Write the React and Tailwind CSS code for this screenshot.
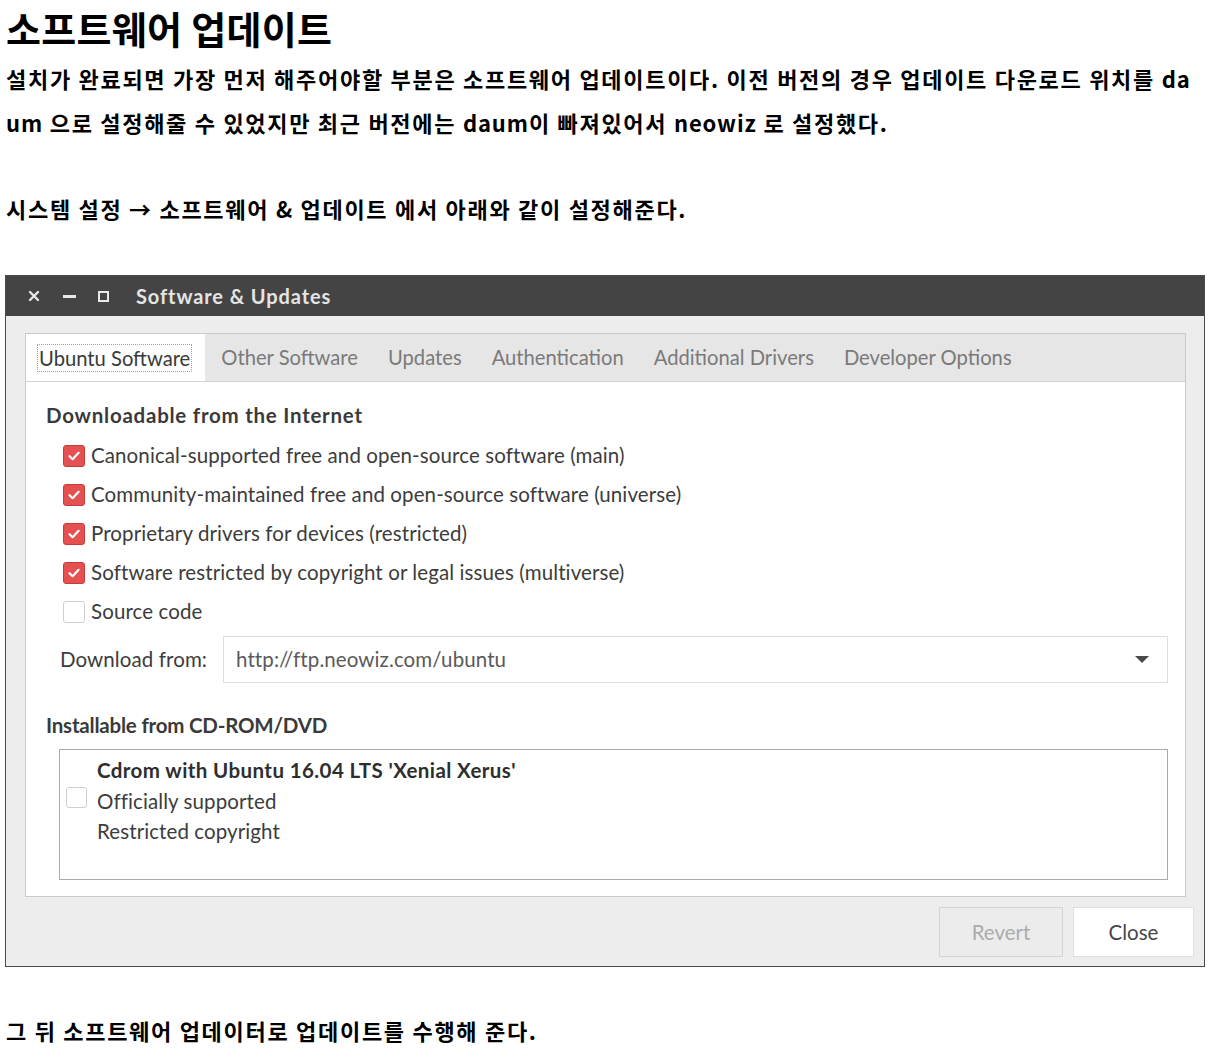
import React from 'react';

const ko = { fontFamily: '"Noto Sans CJK KR", "Noto Sans", sans-serif' };
const ui = { fontFamily: 'Lato, "Noto Sans", sans-serif' };

const tabs = ['Ubuntu Software', 'Other Software', 'Updates', 'Authentication', 'Additional Drivers', 'Developer Options'];

const sources = [
    { label: 'Canonical-supported free and open-source software (main)', checked: true },
    { label: 'Community-maintained free and open-source software (universe)', checked: true },
    { label: 'Proprietary drivers for devices (restricted)', checked: true },
    { label: 'Software restricted by copyright or legal issues (multiverse)', checked: true },
    { label: 'Source code', checked: false },
];

const CheckBox = ({ checked }) => (
    checked ? (
        <span className="w-[22px] h-[22px] rounded-[3px] bg-[#e55151] border border-[#c93c3c] flex items-center justify-center shrink-0">
            <svg width="14" height="14" viewBox="0 0 14 14">
                <path d="M2.5 7.2 L5.6 10.2 L11.6 3.8" stroke="#fff" strokeWidth="2.2" fill="none" strokeLinecap="round" strokeLinejoin="round" />
            </svg>
        </span>
    ) : (
        <span className="w-[22px] h-[22px] rounded-[3px] bg-white border border-[#cfcfcf] shrink-0"></span>
    )
);

// latin words inside the korean text are set a bit tighter
const L = ({ children }) => <span className="tracking-[0.9px]">{children}</span>;

const App = () => {
    return (
        <div className="w-[1232px] min-h-[1060px] bg-white text-black" style={ko}>
            <h1 className="pl-[6px] text-[38px] leading-[56px] font-bold tracking-[0.3px]">소프트웨어 업데이트</h1>
            <p className="pl-[6px] text-[22px] leading-[44px] font-bold whitespace-nowrap tracking-[1.7px]">
                <span className="block">설치가 완료되면 가장 먼저 해주어야할 부분은 소프트웨어 업데이트이다. 이전 버전의 경우 업데이트 다운로드 위치를 <L>da</L></span>
                <span className="block"><L>um</L> 으로 설정해줄 수 있었지만 최근 버전에는 <L>daum</L>이 빠져있어서 <L>neowiz</L> 로 설정했다.</span>
            </p>
            <p className="pl-[6px] mt-[42px] text-[22px] leading-[44px] font-bold tracking-[1.7px]">시스템 설정 → 소프트웨어 &amp; 업데이트 에서 아래와 같이 설정해준다.</p>

            <div className="ml-[5px] mt-[45px] w-[1200px] h-[692px] border border-[#4a4a4a] bg-[#ededed] flex flex-col" style={ui}>
                <div className="h-[40px] bg-[#444444] flex items-center shrink-0">
                    <svg className="ml-[21px]" width="14" height="14" viewBox="0 0 14 14">
                        <path d="M3 3 L11 11 M11 3 L3 11" stroke="#e8e8e8" strokeWidth="2.4" strokeLinecap="round" />
                    </svg>
                    <span className="ml-[22px] w-[13px] h-[3px] bg-[#e8e8e8]"></span>
                    <span className="ml-[22px] w-[11px] h-[11px] border-[2.5px] border-[#e8e8e8]"></span>
                    <span className="ml-[27px] text-[20px] font-bold tracking-[0.9px] text-[#e4e4e4]">Software &amp; Updates</span>
                </div>

                <div className="ml-[19px] mr-[18px] mt-[17px] h-[564px] border border-[#cacaca] flex flex-col bg-white">
                    <div className="h-[48px] bg-[#e6e6e6] border-b border-[#d2d2d2] flex shrink-0">
                        {tabs.map((t, i) => (
                            <div key={t} className={`h-full flex items-center text-[20.2px] ${i === 0 ? 'bg-white text-[#3a3a3a] pl-[11px] pr-[13px] mr-[1px]' : 'text-[#7a7a7a] px-[15px]'}`}>
                                {i === 0 ? (
                                    <span className="border border-dotted border-[#e88080] leading-[26px] px-[1px]">{t}</span>
                                ) : t}
                            </div>
                        ))}
                    </div>

                    <div className="flex-1 pl-[20px] pr-[17px] pt-[19px] text-[#333] text-[20.5px] tracking-[0.1px]">
                        <div className="leading-[28px] font-bold tracking-[0.75px] text-[#3a3a3a]">Downloadable from the Internet</div>
                        <div className="mt-[7px]">
                            {sources.map((s) => (
                                <div key={s.label} className="h-[39px] flex items-center pl-[17px] gap-[6px] text-[#3c3c3c]">
                                    <CheckBox checked={s.checked} />
                                    <span>{s.label}</span>
                                </div>
                            ))}
                        </div>
                        <div className="mt-[5px] flex items-center">
                            <span className="w-[177px] pl-[14px] text-[#3c3c3c] shrink-0">Download from:</span>
                            <div className="flex-1 h-[47px] border border-[#dedede] bg-white flex items-center pl-[12px] pr-[18px] text-[#5a5a5a]">
                                <span className="flex-1">http://ftp.neowiz.com/ubuntu</span>
                                <svg width="14" height="8" viewBox="0 0 14 8">
                                    <path d="M0 0 L14 0 L7 7 Z" fill="#4a4a4a" />
                                </svg>
                            </div>
                        </div>

                        <div className="mt-[28px] leading-[28px] font-bold tracking-[-0.2px] text-[#3a3a3a]">Installable from CD-ROM/DVD</div>
                        <div className="mt-[10px] ml-[13px] h-[131px] border border-[#ababab] bg-white flex items-start pt-[5px]">
                            <div className="pl-[6px] pt-[32px]">
                                <span className="block w-[21px] h-[21px] rounded-[3px] border border-[#cfcfcf] bg-white"></span>
                            </div>
                            <div className="pl-[10px] leading-[30.5px] text-[#3c3c3c]">
                                <div className="font-bold tracking-[0.4px] text-[#2e2e2e]">Cdrom with Ubuntu 16.04 LTS 'Xenial Xerus'</div>
                                <div>Officially supported</div>
                                <div>Restricted copyright</div>
                            </div>
                        </div>
                    </div>
                </div>

                <div className="flex justify-end gap-[10px] mt-[10px] mr-[10px]">
                    <button className="w-[124px] h-[50px] border border-[#d4d4d4] bg-[#ececec] text-[20.5px] text-[#ababab]">Revert</button>
                    <button className="w-[121px] h-[50px] border border-[#e0e0e0] bg-white text-[20.5px] text-[#474747]">Close</button>
                </div>
            </div>

            <p className="pl-[6px] mt-[41px] text-[22px] leading-[44px] font-bold tracking-[1.7px]">그 뒤 소프트웨어 업데이터로 업데이트를 수행해 준다.</p>
        </div>
    );
};

export default App;
